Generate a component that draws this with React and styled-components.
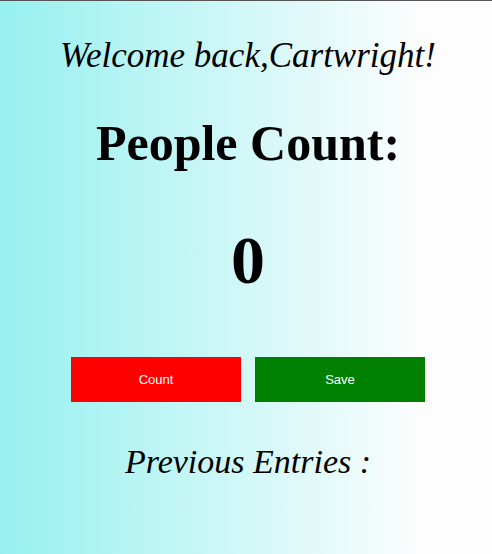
import React, { useState } from "react";
import styled, { createGlobalStyle } from "styled-components";

const GlobalStyle = createGlobalStyle`
    html, body {
        margin: 0;
        padding: 0;
        height: 100%;
    }
    body {
        font-family: "Liberation Serif", "Times New Roman", serif;
        border-top: 1px solid #555;
        box-sizing: border-box;
    }
    #root {
        height: 100%;
    }
`;

const App = () => {
    const [count, setCount] = useState(0);

    return (
        <>
            <GlobalStyle />
            <Page>
                <Welcome>Welcome back,Cartwright!</Welcome>
                <Title>People Count:</Title>
                <CountValue>{count}</CountValue>
                <ButtonRow>
                    <ActionButton $bg="red" onClick={() => setCount(count + 1)}>
                        Count
                    </ActionButton>
                    <ActionButton $bg="green">Save</ActionButton>
                </ButtonRow>
                <Entries>Previous Entries :</Entries>
            </Page>
        </>
    );
};

export default App;

const Page = styled.div`
    min-height: 100%;
    box-sizing: border-box;
    display: flex;
    flex-direction: column;
    align-items: center;
    padding: 35px 0 0 4px;
    background: linear-gradient(to right, #97f0f0 0%, #fdfdfd 86%);
`;

const Welcome = styled.h3`
    margin: 0;
    font-size: 35px;
    font-weight: 400;
    font-style: italic;
`;

const Title = styled.h1`
    margin: 38px 0 0;
    font-size: 50px;
    font-weight: 700;
`;

const CountValue = styled.h2`
    margin: 49px 0 0;
    font-size: 68px;
    font-weight: 700;
`;

const ButtonRow = styled.div`
    display: flex;
    gap: 14px;
    margin-top: 57px;
`;

const ActionButton = styled.button`
    width: 170px;
    height: 45px;
    border: none;
    background: ${(p) => p.$bg};
    color: white;
    font-family: "Liberation Sans", Arial, sans-serif;
    font-size: 13px;
    cursor: pointer;
`;

const Entries = styled.h3`
    margin: 41px 0 0;
    font-size: 34px;
    font-weight: 400;
    font-style: italic;
`;
